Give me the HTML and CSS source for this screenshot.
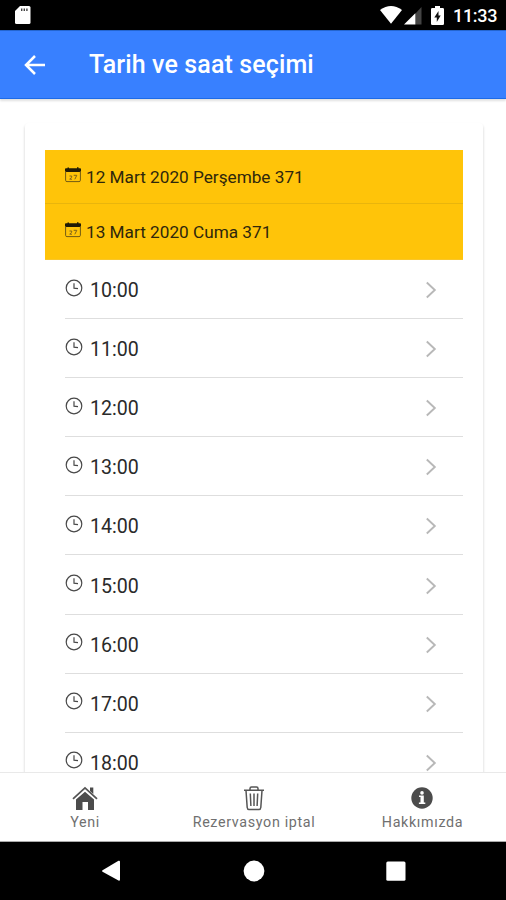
FILE: index.html
```html
<!DOCTYPE html>
<html lang="tr">
<head>
<meta charset="utf-8">
<title>Tarih ve saat seçimi</title>
<link rel="stylesheet" href="styles.css">
</head>
<body>
<svg class="defs" aria-hidden="true">
  <symbol id="clock" viewBox="0 0 18 18"><circle cx="9" cy="9" r="7.8"/><path d="M9 4.2V9.2L13 9.6"/></symbol>
  <symbol id="chevron" viewBox="0 0 12 18"><path d="M1.8 1.5L9.8 9L1.8 16.5"/></symbol>
  <symbol id="calendar" viewBox="0 0 16 16"><path class="fill" d="M0 2Q0 1.2 1 1.2H2.5V.5H4V1.2H12V.3H13.5V1.2H15Q16 1.2 16 2V5H0Z"/><path class="line" d="M.6 4V13.3Q.6 14.6 2 14.6H14Q15.4 14.6 15.4 13.3V4"/><path class="digits" d="M4.5 9H6.7V10.2L4.7 12.2H7M8.7 8.3H11.8L9.8 12.3"/></symbol>
</svg>
<div class="screen">
  <div class="status">
    <svg class="sd" viewBox="0 0 16 20"><path fill="#fff" d="M5 1H14Q15.5 1 15.5 2.5V17.5Q15.5 19 14 19H1.5Q0 19 0 17.5V6Z"/><path stroke="#444" stroke-width="1.4" d="M6.7 3.5V6M9.3 3.5V6M11.9 3.5V6"/></svg>
    <div class="status-right">
      <svg class="wifi" viewBox="0 0 22 18"><path fill="#fff" d="M0 4Q11-3.8 22 4L11 17.7Z"/></svg>
      <svg class="signal" viewBox="0 0 18 18"><path fill="#444" d="M11 7L17.5 0V17.5H11Z"/><path fill="#fff" d="M0 17.5L11.3 6.2V17.5Z"/></svg>
      <svg class="battery" viewBox="0 0 13 19"><path fill="#fff" d="M1.3 2H4V0H9V2H11.7Q13 2 13 3.3V17.7Q13 19 11.7 19H1.3Q0 19 0 17.7V3.3Q0 2 1.3 2Z"/><path fill="#111" d="M7.5 5L3.3 11.4H5.8V16L9.7 9.6H7.5Z"/></svg>
      <span class="time">11:33</span>
    </div>
  </div>
  <header class="header">
    <svg class="back" viewBox="0 0 22 20"><path d="M21 10H2M11 1L2 10L11 19"/></svg>
    <h1>Tarih ve saat seçimi</h1>
  </header>
  <main class="content">
    <div class="card">
      <div class="date"><svg><use href="#calendar"/></svg><span>12 Mart 2020 Perşembe 371</span></div>
      <div class="date"><svg><use href="#calendar"/></svg><span>13 Mart 2020 Cuma 371</span></div>
      <div class="slots">
        <div class="slot"><svg class="clock"><use href="#clock"/></svg><span>10:00</span><svg class="chevron"><use href="#chevron"/></svg></div>
        <div class="slot"><svg class="clock"><use href="#clock"/></svg><span>11:00</span><svg class="chevron"><use href="#chevron"/></svg></div>
        <div class="slot"><svg class="clock"><use href="#clock"/></svg><span>12:00</span><svg class="chevron"><use href="#chevron"/></svg></div>
        <div class="slot"><svg class="clock"><use href="#clock"/></svg><span>13:00</span><svg class="chevron"><use href="#chevron"/></svg></div>
        <div class="slot"><svg class="clock"><use href="#clock"/></svg><span>14:00</span><svg class="chevron"><use href="#chevron"/></svg></div>
        <div class="slot"><svg class="clock"><use href="#clock"/></svg><span>15:00</span><svg class="chevron"><use href="#chevron"/></svg></div>
        <div class="slot"><svg class="clock"><use href="#clock"/></svg><span>16:00</span><svg class="chevron"><use href="#chevron"/></svg></div>
        <div class="slot"><svg class="clock"><use href="#clock"/></svg><span>17:00</span><svg class="chevron"><use href="#chevron"/></svg></div>
        <div class="slot"><svg class="clock"><use href="#clock"/></svg><span>18:00</span><svg class="chevron"><use href="#chevron"/></svg></div>
      </div>
    </div>
  </main>
  <nav class="tabs">
    <div class="tab"><svg viewBox="0 0 26 26"><path fill="#4c4c4c" d="M4 14.5L13 6.8L22 14.5V25H16V17H10.5V25H4Z"/><path fill="#4c4c4c" d="M18 2.5H21.3V9L18 6Z"/><path fill="none" stroke="#555" stroke-width="1.8" d="M1 13.8L13 2.9L25 13.8"/></svg><span>Yeni</span></div>
    <div class="tab"><svg viewBox="0 0 26 26"><path fill="none" stroke="#555" stroke-width="1.5" d="M3 5.2H23M9 5V3.5Q9 2 10.5 2H15.5Q17 2 17 3.5V5M5 5.5L6.2 22.5Q6.4 24.5 8 24.5H18Q19.6 24.5 19.8 22.5L21 5.5M9.3 8.5L9.9 21M13 8.5V21M16.7 8.5L16.1 21"/></svg><span>Rezervasyon iptal</span></div>
    <div class="tab"><svg viewBox="0 0 26 26"><circle cx="13" cy="13" r="10.7" fill="#4c4c4c"/><circle cx="13" cy="7.9" r="1.8" fill="#fff"/><path fill="#fff" d="M10 10.5H14.8V17.5H16.3V19H9.9V17.5H11.5V12H10Z"/></svg><span>Hakkımızda</span></div>
  </nav>
  <div class="system">
    <svg viewBox="0 0 22 22"><path fill="#fff" d="M1.5 10.2L17.5.8Q19 .2 19 2V19.5Q19 21.2 17.5 20.4L1.5 11.8Q.5 11 1.5 10.2Z"/></svg>
    <svg viewBox="0 0 22 22"><circle cx="11" cy="11" r="10.4" fill="#fff"/></svg>
    <svg viewBox="0 0 22 22"><rect x="1.3" y="1.5" width="19.2" height="19.2" rx="1.5" fill="#fff"/></svg>
  </div>
</div>
</body>
</html>
```
FILE: styles.css
```css
* { box-sizing: border-box; }
body { margin: 0; background: #fff; font-family: Roboto, "Liberation Sans", sans-serif; }
svg { display: block; flex: none; }
.defs { position: absolute; width: 0; height: 0; }
.screen { width: 506px; height: 900px; display: flex; flex-direction: column; overflow: hidden; }
.status { height: 30px; flex: none; background: #000; display: flex; justify-content: space-between; padding: 0 9px 0 15px; }
.sd { width: 16px; height: 20px; margin-top: 5px; }
.status-right { display: flex; align-items: flex-start; color: #fff; }
.wifi { width: 22px; height: 18px; margin-top: 6px; }
.signal { width: 18px; height: 18px; margin: 7px 0 0 2px; }
.battery { width: 13px; height: 19px; margin: 6px 0 0 9px; }
.time { margin-left: 9px; width: 44px; font-size: 18px; font-weight: 500; line-height: 32px; letter-spacing: -.3px; white-space: nowrap; }
.header { height: 69px; flex: none; background: #3880ff; border-top: 1px solid #2465cf; border-bottom: 1px solid #1d6be8; display: flex; align-items: center; padding-left: 24px; color: #fff; box-shadow: 0 2px 2px rgba(0,0,0,.12); position: relative; }
.back { width: 22px; height: 20px; }
.back path { fill: none; stroke: #fff; stroke-width: 2.5; }
h1 { margin: 0 0 0 43px; padding-top: 1px; font-size: 25px; letter-spacing: .12px; font-weight: 500; line-height: 30px; white-space: nowrap; }
.content { flex: 1; min-height: 0; overflow: hidden; padding: 24px 23px 0 25px; }
.card { height: 720px; padding: 27px 20px 0; border-radius: 4px; box-shadow: 0 2px 3px rgba(0,0,0,.2); }
.date { height: 54px; background: #ffc409; color: #2e270c; display: flex; align-items: center; padding: 0 20px; font-size: 17.2px; border-bottom: 1px solid #e9b50c; }
.date + .date { height: 56px; border-bottom: 1px solid #f9c62a; }
.date svg { width: 16px; height: 16px; margin: -3px 5px 0 0; }
.fill { fill: #211b05; }
.line { fill: none; stroke: #725b14; stroke-width: 1; }
.digits { fill: none; stroke: #80651a; stroke-width: 1; }
.slots { padding-left: 20px; }
.slot { height: 59.1px; padding-top: 2px; display: flex; align-items: center; border-bottom: 1px solid #dedede; color: #2a2a2a; font-size: 19.6px; }
.slot span { padding-top: 1px; }
.clock { width: 18px; height: 18px; margin: -5px 7px 0 0; fill: none; stroke: #484848; stroke-width: 1.2; }
.chevron { width: 12px; height: 18px; margin: 0 26px 0 auto; fill: none; stroke: #b8b8b8; stroke-width: 1.9; }
.tabs { height: 70px; flex: none; display: grid; grid-template-columns: 169px 169px 168px; background: #fff; border-top: 1px solid #e9e9e9; border-bottom: 1px solid #aaa; position: relative; }
.tab { display: flex; flex-direction: column; align-items: center; padding-top: 12px; color: #707070; font-size: 14.3px; line-height: 18px; letter-spacing: .65px; white-space: nowrap; }
.tab svg { width: 26px; height: 26px; margin-bottom: 2px; }
.tab span { margin-left: 1px; }
.system { height: 58px; flex: none; background: #000; display: flex; justify-content: space-between; padding: 18px 99px 0 101px; }
.system svg { width: 22px; height: 22px; }
```
